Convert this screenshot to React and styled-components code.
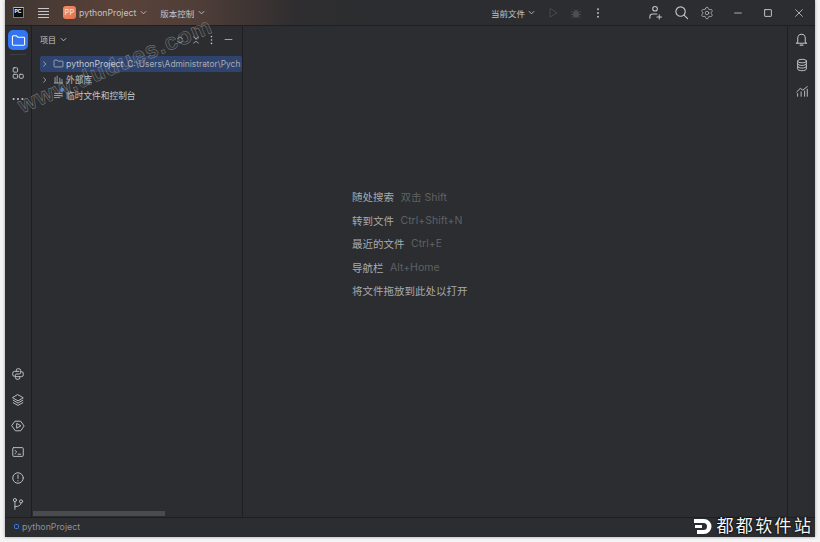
import React from 'react';
import styled, { createGlobalStyle } from 'styled-components';
import { Settings } from 'lucide-react';

const Global = createGlobalStyle`
  html, body { margin: 0; padding: 0; background: #fff; }
  body { font-family: Inter, "Noto Sans CJK SC", "Liberation Sans", sans-serif; }
  #root { width: 820px; height: 542px; overflow: hidden; }
`;

const Page = styled.div`
  width: 820px; height: 542px; box-sizing: border-box;
  padding: 0 5px 5px; background: #f4f4f4; position: relative; overflow: hidden;
`;
const Win = styled.div`
  width: 810px; height: 537px; display: flex; flex-direction: column;
  background: #2b2d30; color: #bcbec4; box-shadow: 0 0 3px rgba(0,0,0,.35);
`;
const TitleBar = styled.header`
  height: 26px; flex: none; display: flex; align-items: center; box-sizing: border-box;
  border-bottom: 1px solid #1e1f22; padding-right: 10px;
  background: linear-gradient(90deg, #3f3632 0%, #5a4238 14%, #4f3e38 24%, #2f2d2f 36%, #2b2d30 46%);
`;
const Logo = styled.div`
  width: 11px; height: 11px; margin-left: 8px; background: #0c0c0c; flex: none;
  border: 1px solid #23b07a; border-top-color: #9fdc4a; border-right-color: #27a0d0; box-sizing: border-box;
  color: #fff; font: 700 5px/7px "Liberation Sans", sans-serif; padding-left: .5px; overflow: hidden;
`;
const Burger = styled.button`
  all: unset; margin-left: 14px; width: 11px; display: flex; flex-direction: column; gap: 2px; flex: none;
  & > i { display: block; height: 1px; background: #c5c7cc; }
`;
const Badge = styled.div`
  margin-left: 14px; width: 13px; height: 13px; border-radius: 3px; flex: none;
  background: linear-gradient(135deg, #f08f6a, #e2704e); color: #fbe5d9;
  font-size: 7.5px; line-height: 13px; text-align: center; letter-spacing: .2px;
`;
const TitleText = styled.span`
  font-size: ${p => p.$size || 8.7}px; color: ${p => p.$color || '#c4c4c6'}; white-space: nowrap;
  margin-left: ${p => p.$ml || 0}px;
`;
const Spacer = styled.div`flex: 1;`;
const IconSlot = styled.div`
  width: ${p => p.$w ?? 16}px; margin-left: ${p => p.$ml || 0}px; flex: none;
  display: flex; align-items: center; justify-content: center; color: ${p => p.$color || '#c4c6cb'};
`;

const Body = styled.div`flex: 1; display: flex; min-height: 0;`;
const LeftRail = styled.nav`
  width: 26px; flex: none; display: flex; flex-direction: column; align-items: center;
  border-right: 1px solid #1e1f22; padding-top: 4px;
`;
const ActiveTool = styled.div`
  width: 20px; height: 20px; border-radius: 5px; background: #3574f0; display: flex;
  align-items: center; justify-content: center; color: #fff; flex: none;
`;
const RailSep = styled.div`width: 16px; height: 1px; background: #3c3e42; margin: 4px 0 5px;`;
const RailIcon = styled.div`
  height: 26px; width: 26px; flex: none; display: flex; align-items: center; justify-content: center; color: #c0c2c7;
`;
const RailGrow = styled.div`flex: 1;`;

const Panel = styled.aside`
  width: 210px; flex: none; display: flex; flex-direction: column; border-right: 1px solid #1e1f22;
  position: relative; min-width: 0;
`;
const PanelHead = styled.div`
  height: 27px; flex: none; display: flex; align-items: center; padding: 0 8px;
`;
const Tree = styled.div`margin-top: 3px; display: flex; flex-direction: column; padding-left: 8px;`;
const Row = styled.div`
  height: 15.75px; display: flex; align-items: center; white-space: nowrap; overflow: hidden; font-size: 8.7px;
  border-radius: 2px; background: ${p => p.$sel ? '#2e436e' : 'transparent'}; color: #c4c6cb;
`;
const Arrow = styled.div`width: 9px; margin-right: 4px; display: flex; justify-content: center; flex: none; color: #a8aaae;`;
const RowIcon = styled.div`width: 11px; margin-right: 2px; flex: none; display: flex; position: relative; color: #bcbec4;`;
const Dot = styled.i`position: absolute; width: 4px; height: 4px; border-radius: 50%; background: #3f7fe0; top: -2px; right: 0;`;
const Path = styled.span`margin-left: 4px; color: #a9abb0; font-size: 8.4px;`;
const HScroll = styled.div`
  position: absolute; left: 1px; bottom: 1px; width: 132px; height: 5px; background: #4a4b4e;
`;

const Editor = styled.main`
  flex: 1; display: flex; flex-direction: column; padding: 159px 0 0 109px; min-width: 0;
`;
const Hint = styled.div`
  height: 23.5px; display: flex; align-items: center; font-size: 10.5px; color: #a8aaae; white-space: nowrap;
`;
const Key = styled.span`margin-left: 6.5px; color: #5f6165; font-size: 10.5px;`;

const RightRail = styled.nav`
  width: 27px; flex: none; border-left: 1px solid #1e1f22; display: flex; flex-direction: column;
  align-items: center;
`;
const Status = styled.footer`
  height: 20px; flex: none; display: flex; align-items: center; box-sizing: border-box;
  border-top: 1px solid #1e1f22; padding: 0 0 2px 9px; font-size: 8.8px; color: #8f9196;
`;
const ModuleMark = styled.i`
  width: 3px; height: 3px; border: 1px solid #3d7fe6; border-radius: 1.5px; margin-right: 3px; display: block;
`;
const Watermark = styled.div`
  position: absolute; left: 19px; top: 93px; transform: rotate(-23deg); transform-origin: left center;
  font: 700 23px "Liberation Sans", sans-serif; letter-spacing: 1px; color: rgba(255,255,255,.05);
  -webkit-text-stroke: .5px rgba(185,185,185,.6); white-space: nowrap; pointer-events: none;
`;
const Brand = styled.div`
  position: absolute; right: 9px; bottom: 7px; display: flex; align-items: center; gap: 4px;
  color: #f5f5f5; font-size: 17px; letter-spacing: 2.4px; line-height: 18px; margin-right: -2.4px;
  text-shadow: 0 0 2px #000, 0 0 2px #000;
`;

const S = ({ size = 14, sw = 1.1, children }) => (
  <svg width={size} height={size} viewBox="0 0 16 16" fill="none" stroke="currentColor" strokeWidth={sw} strokeLinecap="round" strokeLinejoin="round">{children}</svg>
);
const Chevron = () => <svg width="7" height="7" viewBox="0 0 8 8" fill="none" stroke="currentColor" strokeWidth="1"><path d="M1 2.5 4 5.5 7 2.5" /></svg>;
const ChevronR = () => <svg width="7" height="8" viewBox="0 0 8 8" fill="none" stroke="currentColor" strokeWidth="1"><path d="M2.5 1 5.5 4 2.5 7" /></svg>;
const Folder = ({ size = 12 }) => <S size={size}><path d="M1.5 4a1 1 0 0 1 1-1h3.3l1.6 1.6h6.1a1 1 0 0 1 1 1V12a1 1 0 0 1-1 1h-11a1 1 0 0 1-1-1z" /></S>;
const Dots = () => <S size={12} sw={0}><g fill="currentColor"><circle cx="8" cy="3" r="1.2" /><circle cx="8" cy="8" r="1.2" /><circle cx="8" cy="13" r="1.2" /></g></S>;

export default function App() {
  return (
    <Page>
      <Global />
      <Win>
        <TitleBar>
          <Logo>PC</Logo>
          <Burger><i /><i /><i /><i /></Burger>
          <Badge>PP</Badge>
          <TitleText $ml={3}>pythonProject</TitleText>
          <IconSlot $w={11} $ml={2}><Chevron /></IconSlot>
          <TitleText $ml={11} $size={8.5}>版本控制</TitleText>
          <IconSlot $w={11} $ml={2}><Chevron /></IconSlot>
          <Spacer />
          <TitleText $size={8.5}>当前文件</TitleText>
          <IconSlot $w={11} $ml={1}><Chevron /></IconSlot>
          <IconSlot $ml={9} $w={14} $color="#4c4e52"><S size={12}><path d="M4 2.5v11l9-5.5z" /></S></IconSlot>
          <IconSlot $ml={9} $w={14} $color="#4c4e52"><S size={12}><ellipse cx="8" cy="9.5" rx="3.5" ry="4.5" fill="currentColor" /><path d="M5.5 3.5 7 5M10.5 3.5 9 5M2 6l2.5 1.5M14 6l-2.5 1.5M1.5 10h3M14.5 10h-3M2.5 14l2.5-2M13.5 14l-2.5-2" /></S></IconSlot>
          <IconSlot $ml={8} $w={14}><Dots /></IconSlot>
          <IconSlot $ml={42} $w={16}><S size={15}><circle cx="7.5" cy="4" r="2.5" /><path d="M2 14v-1.5a3 3 0 0 1 3-3h4.5M12 10.5v4.5M9.5 12.75h5" /></S></IconSlot>
          <IconSlot $ml={10} $w={16}><S size={15} sw={1.2}><circle cx="7" cy="7" r="5" /><path d="m11 11 3.5 3.5" /></S></IconSlot>
          <IconSlot $ml={10} $w={16}><Settings size={14} strokeWidth={1.2} /></IconSlot>
          <IconSlot $ml={17} $w={12}><S size={12}><path d="M3.5 8h9" /></S></IconSlot>
          <IconSlot $ml={18} $w={12}><S size={12} sw={1.3}><rect x="3.5" y="3.5" width="9" height="9" rx=".6" /></S></IconSlot>
          <IconSlot $ml={19} $w={12}><S size={12}><path d="m3.5 3.5 9 9M12.5 3.5l-9 9" /></S></IconSlot>
        </TitleBar>
        <Body>
          <LeftRail>
            <ActiveTool><Folder size={15} /></ActiveTool>
            <RailSep />
            <RailIcon><S size={14}><rect x="2.5" y="2" width="5" height="5" rx="1" /><rect x="2.5" y="9.5" width="5" height="4.5" rx="1" /><rect x="9.5" y="9.5" width="4.5" height="4.5" rx="1" /></S></RailIcon>
            <RailIcon><S size={14} sw={0}><g fill="currentColor"><circle cx="3" cy="8" r="1.2" /><circle cx="8" cy="8" r="1.2" /><circle cx="13" cy="8" r="1.2" /></g></S></RailIcon>
            <RailGrow />
            <RailIcon><S size={14}><path d="M6 5V3.5A1.5 1.5 0 0 1 7.5 2h1.5A2 2 0 0 1 11 4v2.5a1.5 1.5 0 0 1-1.5 1.5h-3A1.5 1.5 0 0 0 5 9.5V12a2 2 0 0 0 2 2h1.5a1.5 1.5 0 0 0 1.5-1.5V11" /><path d="M6 5h3M6 11h4M5 10.5H3.5A1.5 1.5 0 0 1 2 9V7a2 2 0 0 1 2-2h2M11 5.5h1.5A1.5 1.5 0 0 1 14 7v2a2 2 0 0 1-2 2h-1" /></S></RailIcon>
            <RailIcon><S size={14}><path d="M8 2 14 5.5 8 9 2 5.5z" /><path d="M2.5 8.2 8 11.5l5.5-3.3M2.5 11 8 14.2l5.5-3.2" /></S></RailIcon>
            <RailIcon><S size={14}><path d="M5 2.5h6L15 8l-4 5.5H5L1 8z" /><path d="M6.5 5.5v5L11 8z" /></S></RailIcon>
            <RailIcon><S size={14}><rect x="2" y="3" width="12" height="10" rx="1" /><path d="m4.5 6 2 2-2 2M8 10.5h3" /></S></RailIcon>
            <RailIcon><S size={14}><circle cx="8" cy="8" r="6" /><path d="M8 4.5v4M8 11v.4" /></S></RailIcon>
            <RailIcon><S size={14}><circle cx="4.5" cy="3.5" r="1.8" /><circle cx="11.5" cy="5" r="1.8" /><path d="M4.5 5.3V14M4.5 11c4 0 7-1.5 7-4.2" /></S></RailIcon>
          </LeftRail>
          <Panel>
            <PanelHead>
              <TitleText $size={8}>项目</TitleText>
              <IconSlot $w={11} $ml={2}><Chevron /></IconSlot>
              <Spacer />
              <IconSlot $w={11}><S size={10}><path d="M4 6l4-3 4 3M4 10l4 3 4-3" /></S></IconSlot>
              <IconSlot $w={11} $ml={5}><S size={10}><path d="M4 3l4 3 4-3M4 13l4-3 4 3" /></S></IconSlot>
              <IconSlot $w={11} $ml={5}><Dots /></IconSlot>
              <IconSlot $w={11} $ml={6}><S size={11}><path d="M3 8h10" /></S></IconSlot>
            </PanelHead>
            <Tree>
              <Row $sel>
                <Arrow><ChevronR /></Arrow>
                <RowIcon><Folder size={11} /></RowIcon>
                <span>pythonProject</span>
                <Path>C:\Users\Administrator\Pych</Path>
              </Row>
              <Row>
                <Arrow><ChevronR /></Arrow>
                <RowIcon><S size={11}><path d="M3 13V5M6 13V3M10 13V6M13 13V8M2 13h12" /></S></RowIcon>
                <span>外部库</span>
              </Row>
              <Row>
                <Arrow />
                <RowIcon><S size={11}><path d="M2 5h11M2 8h11M2 11h7" /></S><Dot /></RowIcon>
                <span>临时文件和控制台</span>
              </Row>
            </Tree>
            <HScroll />
          </Panel>
          <Editor>
            <Hint>随处搜索<Key>双击 Shift</Key></Hint>
            <Hint>转到文件<Key>Ctrl+Shift+N</Key></Hint>
            <Hint>最近的文件<Key>Ctrl+E</Key></Hint>
            <Hint>导航栏<Key>Alt+Home</Key></Hint>
            <Hint>将文件拖放到此处以打开</Hint>
          </Editor>
          <RightRail>
            <RailIcon><S size={15}><path d="M4 11V6.5a4 4 0 0 1 8 0V11l1.5 1h-11zM6.5 14h3" /></S></RailIcon>
            <RailIcon><S size={14}><ellipse cx="8" cy="3.5" rx="5" ry="2" /><path d="M3 3.5v9c0 1.1 2.2 2 5 2s5-.9 5-2v-9M3 6.5c0 1.1 2.2 2 5 2s5-.9 5-2M3 9.5c0 1.1 2.2 2 5 2s5-.9 5-2" /></S></RailIcon>
            <RailIcon><S size={14}><path d="M2 9l4-4 3 2 5-4M3 14v-3M7 14V9M11 14V8M14 14V6" /></S></RailIcon>
          </RightRail>
        </Body>
        <Status><ModuleMark />pythonProject</Status>
      </Win>
      <Watermark>www.dudues.com</Watermark>
      <Brand>
        <svg width="18" height="15" viewBox="0 0 18 15"><path d="M0 0h10a7.5 7.5 0 0 1 0 15H3V11h6.5a3.5 3.5 0 0 0 0-7H0z" fill="#fff" /><rect x="1" y="6" width="7" height="3" fill="#fff" /></svg>
        <span>都都软件站</span>
      </Brand>
    </Page>
  );
}
